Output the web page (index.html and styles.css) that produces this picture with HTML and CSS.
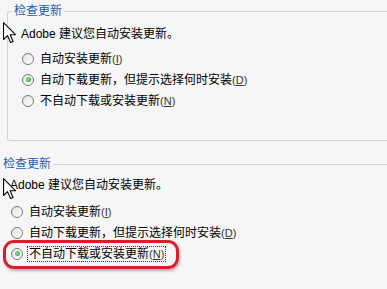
FILE: index.html
```html
<!DOCTYPE html>
<html lang="zh-CN">
<head>
    <meta charset="UTF-8">
    <title>检查更新</title>
    <link rel="stylesheet" href="styles.css">
</head>
<body>

<fieldset class="group">
    <legend>检查更新</legend>
    <div class="group-body">
        <p class="hint">Adobe 建议您自动安装更新。</p>
        <div class="option"><span class="radio"></span><span class="label">自动安装更新<span class="key">(<u>I</u>)</span></span></div>
        <div class="option"><span class="radio checked"></span><span class="label">自动下载更新，但提示选择何时安装<span class="key">(<u>D</u>)</span></span></div>
        <div class="option"><span class="radio"></span><span class="label">不自动下载或安装更新<span class="key">(<u>N</u>)</span></span></div>
    </div>
</fieldset>

<div class="section">
    <div class="section-head"><span class="title">检查更新</span><span class="rule"></span></div>
    <p class="hint">Adobe 建议您自动安装更新。</p>
    <div class="option"><span class="radio"></span><span class="label">自动安装更新<span class="key">(<u>I</u>)</span></span></div>
    <div class="option"><span class="radio"></span><span class="label">自动下载更新，但提示选择何时安装<span class="key">(<u>D</u>)</span></span></div>
    <div class="option marked"><span class="radio checked"></span><span class="label focused">不自动下载或安装更新<span class="key">(<u>N</u>)</span></span></div>
</div>

<!-- mouse pointers from the capture -->
<svg class="cursor cursor-top" width="13" height="22" viewBox="0 0 12 20"><path d="M0.5 0.5 L0.5 16 L4.2 12.4 L7 18.8 L9.3 17.8 L6.6 11.6 L11.5 11.6 Z" fill="#fff" stroke="#000" stroke-width="1" stroke-linejoin="round"/></svg>
<svg class="cursor cursor-bottom" width="13" height="22" viewBox="0 0 12 20"><path d="M0.5 0.5 L0.5 16 L4.2 12.4 L7 18.8 L9.3 17.8 L6.6 11.6 L11.5 11.6 Z" fill="#fff" stroke="#000" stroke-width="1" stroke-linejoin="round"/></svg>

</body>
</html>
```

FILE: styles.css
```css
body {
    margin: 0;
    background: #f6f6f6;
    font-family: "Liberation Sans", "Noto Sans CJK SC", sans-serif;
    font-size: 12px;
    color: #000;
    overflow: hidden;
    position: relative;
    height: 289px;
}
.group {
    margin: 4px 0 0 7px;
    padding: 0 0 29px 0;
    border: 1px solid #d3d3d3;
    border-right: none;
    border-radius: 3px 0 0 3px;
    min-width: 0;
}
.group legend {
    margin-left: 4px;
    padding: 0 2px;
    line-height: 14px;
    color: #1f5bb8;
    font-size: 12px;
}
.group-body {
    padding: 8px 0 0 13px;
}
.hint {
    margin: 0;
    line-height: 16px;
}
.group .hint {
    margin-bottom: 6px;
}
.option {
    display: flex;
    align-items: center;
    height: 21px;
    padding-left: 1px;
}
.radio {
    width: 10px;
    height: 10px;
    border: 1px solid #7a7a7a;
    border-radius: 50%;
    background: linear-gradient(135deg, #e2e2e2, #ffffff);
    margin-right: 5px;
    position: relative;
    flex: none;
}
.radio.checked::after {
    content: "";
    position: absolute;
    left: 2.5px;
    top: 2.5px;
    width: 5px;
    height: 5px;
    border-radius: 50%;
    background: radial-gradient(circle at 40% 40%, #8fe08f, #1f9a2a);
}
.label {
    line-height: 14px;
    padding: 0 1px;
    white-space: nowrap;
}
.key {
    color: #333;
    font-size: 11px;
}
.key u {
    text-decoration-thickness: 1px;
}
.focused {
    outline: 1px dotted #333;
    outline-offset: 0;
}
.section {
    margin-top: 16px;
    padding-left: 10px;
}
.section-head {
    display: flex;
    align-items: center;
    margin-left: -7px;
    height: 14px;
}
.section-head .title {
    color: #1f5bb8;
    line-height: 14px;
    padding-right: 3px;
}
.section-head .rule {
    flex: 1;
    border-top: 1px solid #d3d3d3;
}
.section .hint {
    margin-top: 6px;
    margin-bottom: 8px;
}
.marked {
    position: relative;
}
.marked::before {
    content: "";
    position: absolute;
    left: -7px;
    top: -3px;
    width: 170px;
    height: 23px;
    border: 3px solid #d61f2b;
    border-radius: 11px;
    box-shadow: 1px 2px 3px rgba(0, 0, 0, 0.3);
}
.cursor {
    position: absolute;
    left: 3px;
}
.cursor-top {
    top: 22px;
}
.cursor-bottom {
    top: 178px;
}
```
